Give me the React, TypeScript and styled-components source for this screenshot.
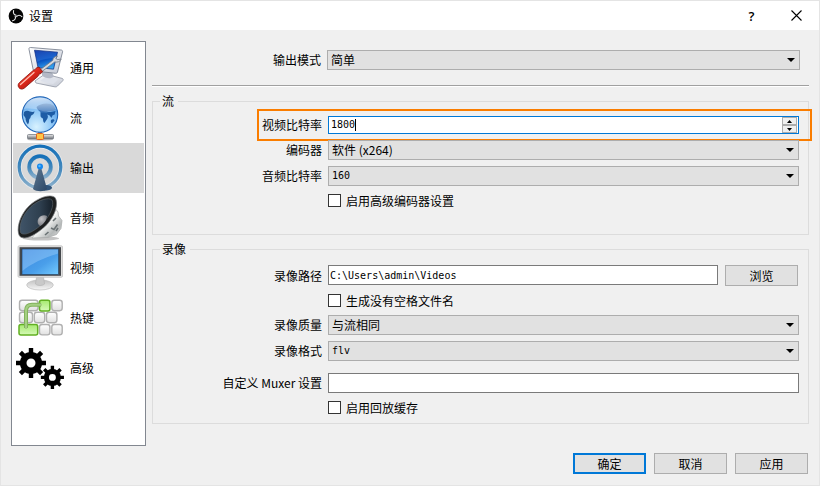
import React, { useId, useState } from "react";
import styled, { createGlobalStyle } from "styled-components";

const cjk = `"Noto Sans CJK SC", "Noto Sans", sans-serif`;
const mono = `"DejaVu Sans Mono", "Noto Sans CJK SC", monospace`;

const GlobalStyle = createGlobalStyle`
  *, *::before, *::after { box-sizing: border-box; }
  body { margin: 0; background: #f0f0f0; color: #000; font: 12px/14px ${cjk}; }
  button, input, select { margin: 0; font: inherit; color: inherit; border-radius: 0; }
`;

const Window = styled.div`
  display: flex;
  flex-direction: column;
  min-height: 100vh;
  border: 1px solid #e4e4e4;
  background: #f0f0f0;
`;

const TitleBar = styled.header`
  display: flex;
  align-items: center;
  height: 29px;
  padding-left: 7px;
  background: #fff;
`;

const Title = styled.h1`
  flex: 1;
  margin: 0 0 0 5px;
  font: 12px/14px ${cjk};
`;

const TitleButton = styled.button`
  display: grid;
  place-items: center;
  width: 45px;
  height: 26px;
  padding: 0;
  border: 0;
  background: none;
  font: 600 13px/16px "Open Sans", sans-serif;
`;

const Body = styled.div`
  display: grid;
  grid-template-columns: 135px minmax(0, 1fr);
  gap: 6px;
  flex: 1;
  padding: 11px 10px 0;
`;

const Sidebar = styled.nav`
  padding: 1px;
  border: 1px solid #828790;
  background: #fff;
`;

const SidebarItem = styled.button<{ $active: boolean }>`
  display: flex;
  align-items: center;
  gap: 6px;
  width: 100%;
  height: 50px;
  padding: 0 3px;
  border: 0;
  background: ${(p) => (p.$active ? "#d9d9d9" : "transparent")};
  text-align: left;
`;

const Pane = styled.main`
  display: flex;
  flex-direction: column;
  padding-top: 9px;
`;

const Row = styled.div<{ $end?: number; $top?: number }>`
  position: relative;
  display: grid;
  grid-template-columns: 169px minmax(0, 1fr);
  column-gap: 6px;
  align-items: center;
  margin-top: ${(p) => p.$top ?? 0}px;
  padding-right: ${(p) => p.$end ?? 9}px;
`;

const Label = styled.label`
  text-align: right;
  white-space: nowrap;
`;

const Divider = styled.hr`
  width: 100%;
  height: 2px;
  margin: 15px 0 7px;
  border: 0;
  border-top: 1px solid #a0a0a0;
  background: #fff;
`;

const Group = styled.fieldset<{ $top: number; $bottom: number }>`
  display: flex;
  flex-direction: column;
  gap: 6px;
  min-width: 0;
  margin: 0 0 7px;
  padding: ${(p) => p.$top}px 0 ${(p) => p.$bottom}px;
  border: 1px solid #dcdcdc;
`;

const Legend = styled.legend`
  margin-left: 7px;
  padding: 0 4px 0 2px;
`;

const Combo = styled.div`
  display: grid;
  align-items: center;

  > * { grid-area: 1 / 1; }
  > svg { justify-self: end; margin-right: 5px; pointer-events: none; }
`;

const Select = styled.select<{ $mono?: boolean }>`
  appearance: none;
  width: 100%;
  height: 20px;
  padding: 0 20px 0 3px;
  border: 1px solid #adadad;
  outline: 0;
  background: #e1e1e1;
  font: ${(p) => (p.$mono ? `10px/16px ${mono}` : `12px/16px ${cjk}`)};
`;

const TextInput = styled.input`
  width: 100%;
  height: 20px;
  padding: 0 1px;
  border: 1px solid #7a7a7a;
  outline: 0;
  background: #fff;
  font: 10px/16px ${mono};
`;

const SpinBox = styled.div`
  display: flex;
  align-items: center;
  height: 18px;
  padding: 0 1px 0 2px;
  border: 1px solid #0078d7;
  background: #fff;
`;

const SpinInput = styled.input`
  field-sizing: content;
  height: 16px;
  padding: 0;
  border: 0;
  outline: 0;
  background: none;
  caret-color: transparent;
  font: 10px/16px ${mono};
`;

const Caret = styled.span`
  width: 1px;
  height: 12px;
  background: #000;
`;

const SpinButtons = styled.div`
  display: grid;
  grid-template-rows: 1fr 1fr;
  width: 15px;
  height: 16px;
  margin-left: auto;
`;

const SpinButton = styled.button`
  display: grid;
  place-items: center;
  padding: 0;
  border: 1px solid #adadad;
  background: #f0f0f0;
`;

const FocusFrame = styled.div`
  position: absolute;
  inset: -7px -4px -7px 104px;
  border: 2px solid #fa7d00;
  pointer-events: none;
`;

const CheckLabel = styled.label`
  display: flex;
  grid-column: 2;
  align-items: center;
  justify-self: start;
  gap: 5px;
  height: 17px;
`;

const CheckBox = styled.input`
  appearance: none;
  width: 13px;
  height: 13px;
  border: 1px solid #333;
  background: #fff;

  &:checked { box-shadow: inset 0 0 0 2px #fff; background: #333; }
`;

const PathField = styled.div`
  display: flex;
  align-items: flex-start;
  gap: 7px;
`;

const Button = styled.button<{ $primary?: boolean }>`
  flex: none;
  width: 73px;
  height: 21px;
  padding: 0;
  border: ${(p) => (p.$primary ? "2px solid #0078d7" : "1px solid #adadad")};
  background: #e1e1e1;
  line-height: 16px;
`;

const Footer = styled.footer`
  display: flex;
  justify-content: flex-end;
  gap: 8px;
  padding: 7px 11px 11px;
`;

const Logo = () => (
  <svg width="16" height="16" viewBox="0 0 16 16" aria-hidden="true">
    <circle cx="8" cy="8" r="7.4" fill="#050505" />
    <g fill="none" stroke="#e8e8e8" strokeWidth="1.1" strokeLinecap="round">
      {[0, 120, 240].map((a) => (
        <path key={a} d="M5.6 2.6C4.9 5.2 6 6.8 8.2 7.2" transform={`rotate(${a} 8 8)`} />
      ))}
    </g>
  </svg>
);

const CloseIcon = () => (
  <svg width="11" height="11" viewBox="0 0 11 11" aria-hidden="true">
    <path d="M.5.5l10 10M10.5.5l-10 10" stroke="#000" strokeWidth="1.1" />
  </svg>
);

const Arrow = ({ up = false, small = false }: { up?: boolean; small?: boolean }) => (
  <svg width={small ? 5 : 8} height={small ? 3 : 4} viewBox="0 0 8 4" preserveAspectRatio="none" aria-hidden="true">
    <path d={up ? "M0 4h8L4 0z" : "M0 0h8L4 4z"} fill="#000" />
  </svg>
);

const Icon = ({ children }: { children: React.ReactNode }) => (
  <svg width="48" height="48" viewBox="0 0 48 48" aria-hidden="true">
    {children}
  </svg>
);

const GeneralIcon = () => (
  <Icon>
    <defs>
      <linearGradient id="gScreen" x1=".2" y1="0" x2=".5" y2="1">
        <stop offset="0" stopColor="#0a2c9c" />
        <stop offset=".55" stopColor="#0b55c4" />
        <stop offset="1" stopColor="#35a8f2" />
      </linearGradient>
      <linearGradient id="gCase" x1="0" y1="0" x2="1" y2="1">
        <stop offset="0" stopColor="#fff" />
        <stop offset="1" stopColor="#c3c8d4" />
      </linearGradient>
      <linearGradient id="gHandle" x1="0" y1="0" x2="1" y2="1">
        <stop offset="0" stopColor="#ff8a73" />
        <stop offset=".45" stopColor="#e02a1c" />
        <stop offset="1" stopColor="#8c0c08" />
      </linearGradient>
    </defs>
    <path d="M19 37l10-7 17.500 4.500c1 .6.8 1.800 0 2.500l-5 5c-1 1-2 1-3.500.7L20 39z" fill="url(#gCase)" stroke="#9a9fab" strokeWidth=".9" />
    <path d="M24 37l6-4.500 12 3-5 4.500z" fill="#dde1ea" />
    <path d="M26 27l10 1.500 2 4c-3 3-9 2-12-1z" fill="#b4b9c6" />
    <path d="M14.500 3.500l30.500 2.500c1.300.1 1.800.9 1.500 2l-5 20c-.3 1-1 1.500-2 1.300L19 27c-1.200-.1-1.700-.7-1.900-1.700L13 5.300c-.2-1.200.4-1.900 1.500-1.800z" fill="url(#gCase)" stroke="#7d8493" strokeWidth=".9" />
    <path d="M18.500 6.200l23 2-4 17-15.500-1.600z" fill="url(#gScreen)" stroke="#0a2a80" strokeWidth=".7" />
    <path d="M19 6.600l22 2-1.500 5.400c-7 0-13 1-18.500 4z" fill="#5aa4ff" opacity=".22" />
    <path d="M22.500 27l14.300-10.800c0-2.200 1.700-3.700 4.700-4.200l-1.700 2.200 1.300 1.500 4.100-.7c-1 2.500-3.700 3.700-6.400 2.900L24 29z" fill="#d5d8de" stroke="#6f7683" strokeWidth=".8" />
    <path d="M3.500 38.500l13-11.500c1-.9 1.400-1.300 2.500-1.200l1.500-2 2.500-.8 3.500 4.500-1.500 2-2 .6c0 1-.4 1.700-1.200 2.400L8.500 44c-2 1.700-4.500 1.300-5.700-.5-1.100-1.700-.8-3.700.7-5z" fill="url(#gHandle)" stroke="#86130d" strokeWidth=".8" />
    <path d="M4.500 40.500l13.500-12" stroke="#ffc0b3" strokeWidth="1.300" strokeLinecap="round" />
  </Icon>
);

const StreamIcon = () => (
  <Icon>
    <defs>
      <radialGradient id="gGlobe" cx=".4" cy=".85" r=".9">
        <stop offset="0" stopColor="#d8f2ff" />
        <stop offset=".5" stopColor="#8fc8f7" />
        <stop offset="1" stopColor="#3a86da" />
      </radialGradient>
      <linearGradient id="gGloss" x1="0" y1="0" x2="0" y2="1">
        <stop offset="0" stopColor="#fff" stopOpacity=".75" />
        <stop offset="1" stopColor="#fff" stopOpacity=".15" />
      </linearGradient>
      <linearGradient id="gPipe" x1="0" y1="0" x2="0" y2="1">
        <stop offset="0" stopColor="#eee" />
        <stop offset="1" stopColor="#686c73" />
      </linearGradient>
    </defs>
    <ellipse cx="24" cy="45.500" rx="13" ry="1.500" fill="#777" opacity=".3" />
    <rect x="22" y="37" width="4" height="5" fill="#8d949e" />
    <rect x="11.500" y="40.500" width="26" height="4.500" rx="1" fill="url(#gPipe)" stroke="#777c84" strokeWidth=".8" />
    <rect x="20.500" y="39.500" width="7" height="6" rx="1" fill="#ffc545" stroke="#e0601f" />
    <circle cx="24" cy="20.500" r="17.700" fill="url(#gGlobe)" stroke="#1f63b4" strokeWidth="1.100" />
    <path d="M8 18c2-1.500 4-1.500 6-.5l2.500.5 2.200-.5-1.200 2.500-2.500 1.700-.7 2.300c-1 .8-1.500 2-1.300 4l-1 2.500c-2-2.500-2.500-4.500-2.500-6.500L7.500 21z" fill="#1f5a9f" />
    <path d="M20.500 13c4-4 13-5 17.500-1l1.500 3.500c-3 2.500-6 1.500-9 2.500-2.500 1-5 1-6.500-.3-1.500-1-3-2.700-3.500-4.700z" fill="#3c76bb" />
    <path d="M24.500 18c3 1 7-.5 10 0l5-1-.8 3.500-2 .8-1.300 2.700-1.700-2.500-2.500-1c1 1.500 1 3-.2 4.700L28.500 29c-1.300-1-1.500-2.500-1.500-4.500-1.700-.7-2.800-1.800-2.500-3.500z" fill="#1d5ca6" />
    <path d="M35 26c1.500-1 3-1 3.500.5l-2.500 3c-1-.5-1.500-2-1-3.500z" fill="#1d5ca6" />
    <path d="M8 15C10 7 17 3.500 24 3.500S38 7 40 15c-5 4-10 3-15 1.500S13 14 8 15z" fill="url(#gGloss)" />
  </Icon>
);

const OutputIcon = () => (
  <Icon>
    <defs>
      <linearGradient id="gRing" x1="0" y1="0" x2="0" y2="1">
        <stop offset="0" stopColor="#1570b8" />
        <stop offset=".55" stopColor="#4489bd" />
        <stop offset="1" stopColor="#8db1cc" />
      </linearGradient>
      <linearGradient id="gMast" x1="0" y1="0" x2="1" y2="1">
        <stop offset="0" stopColor="#5e7891" />
        <stop offset="1" stopColor="#2b4767" />
      </linearGradient>
    </defs>
    <circle cx="24" cy="23" r="20.800" fill="none" stroke="#eef2f5" strokeWidth="5" opacity=".6" />
    <circle cx="24" cy="23" r="20.800" fill="none" stroke="url(#gRing)" strokeWidth="3.200" />
    <circle cx="24" cy="23" r="10.800" fill="none" stroke="url(#gRing)" strokeWidth="3.800" />
    <path d="M26 44c0-4 9-4 10-.5 0 2-4 3.500-8 3z" fill="#31557b" />
    <path d="M22.500 25h3l5.500 20c-2 3-11 3-14 0z" fill="url(#gMast)" />
    <circle cx="24" cy="22.500" r="3" fill="#1687ed" />
    <circle cx="23.500" cy="22" r="1.200" fill="#58bcff" />
  </Icon>
);

const AudioIcon = () => (
  <Icon>
    <defs>
      <linearGradient id="gCone" x1="0" y1="0" x2="1" y2="0">
        <stop offset="0" stopColor="#405468" />
        <stop offset=".6" stopColor="#2f4050" />
        <stop offset="1" stopColor="#17212b" />
      </linearGradient>
      <linearGradient id="gMagnet" x1="0" y1="0" x2="1" y2="1">
        <stop offset="0" stopColor="#878b8b" />
        <stop offset=".5" stopColor="#f5f6f5" />
        <stop offset=".75" stopColor="#b5b9b9" />
        <stop offset="1" stopColor="#ddd" />
      </linearGradient>
      <radialGradient id="gCap" cx=".4" cy=".35" r=".7">
        <stop offset="0" stopColor="#c3c3c7" />
        <stop offset="1" stopColor="#77797f" />
      </radialGradient>
    </defs>
    <ellipse cx="25" cy="44.500" rx="18" ry="2" fill="#555" opacity=".35" />
    <path d="M38 13l4 5 .5 4 3.500 4.500-1 8-4.500 6-8.500 3-16 .5z" fill="url(#gMagnet)" stroke="#a5a8a8" strokeWidth=".7" />
    <path d="M37 27l3-3M35 34l3 1.500 3.500-5M29 41l3.500-3M40 37l2-3" stroke="#6a7274" strokeWidth="1.600" fill="none" />
    <path d="M3.500 42C0 36 3 22 13 12 22 3.500 34-.5 39 3.500c4 6 0 18-8 27C21 40.500 8 47.500 3.500 42z" fill="#1d1f20" stroke="#7d8082" strokeWidth=".7" />
    <path d="M4.500 38.500C2.500 32 6 21 15 12.500c8-7 18-9.500 21-6.500 2.500 5-1.500 15-8.500 22.500C20.500 36 8 43.500 4.500 38.500z" fill="url(#gCone)" stroke="#5e666b" strokeWidth=".6" />
    <path d="M24 32c-2.500-1.500-3-5-1.500-7.500C24.500 21.500 28 20.500 31 22c-.5 4-3 8-7 10z" fill="url(#gCap)" />
  </Icon>
);

const VideoIcon = () => (
  <Icon>
    <defs>
      <linearGradient id="gDisplay" x1="0" y1="0" x2="1" y2="1">
        <stop offset="0" stopColor="#3a86df" />
        <stop offset=".6" stopColor="#4a9fea" />
        <stop offset="1" stopColor="#74cbff" />
      </linearGradient>
      <linearGradient id="gStand" x1="0" y1="0" x2="0" y2="1">
        <stop offset="0" stopColor="#c2c2c2" />
        <stop offset="1" stopColor="#f6f6f6" />
      </linearGradient>
    </defs>
    <ellipse cx="24" cy="41" rx="13.300" ry="5" fill="url(#gStand)" stroke="#c3c3c3" strokeWidth=".8" />
    <path d="M20.500 33h7l1 7c-2 2-7 2-9 0z" fill="#c9c9c9" stroke="#aaa" strokeWidth=".5" />
    <rect x="2" y="1.800" width="44.500" height="31.500" rx="1.200" fill="#e0e0e0" stroke="#c3c3c3" strokeWidth=".8" />
    <rect x="3.500" y="3.200" width="41.500" height="28.600" fill="#45484c" />
    <rect x="6" y="5" width="36.500" height="25.500" fill="url(#gDisplay)" stroke="#26405e" strokeWidth=".6" />
    <path d="M6.500 5.500h35.500v4C30 13 14 20 6.500 27z" fill="#b5dcff" opacity=".35" />
  </Icon>
);

const keys = [
  [3.5, 6.3, 18.5],
  [35.8, 6.3, 10.4],
  [3.5, 18.3, 13],
  [18.3, 18.3, 10.4],
  [30.5, 18.3, 10.4],
  [23.5, 30.5, 10.4],
  [35.8, 30.5, 10.4],
];

const HotkeysIcon = () => (
  <Icon>
    <defs>
      <linearGradient id="gKey" x1="0" y1="0" x2="0" y2="1">
        <stop offset="0" stopColor="#fff" />
        <stop offset="1" stopColor="#e0e0e0" />
      </linearGradient>
      <linearGradient id="gGreen" x1="0" y1="0" x2="0" y2="1">
        <stop offset="0" stopColor="#a6ea70" />
        <stop offset="1" stopColor="#d6f9b8" />
      </linearGradient>
    </defs>
    {keys.map(([x, y, w]) => (
      <rect key={`${x}-${y}`} x={x} y={y} width={w} height="10.400" rx="2.600" fill="url(#gKey)" stroke="#b0b0b0" strokeWidth="1.400" />
    ))}
    <rect x="23.500" y="6.300" width="10.400" height="10.600" rx="2" fill="url(#gGreen)" stroke="#62b022" strokeWidth="1.500" />
    <rect x="3" y="30.500" width="18.700" height="10.600" rx="2" fill="url(#gGreen)" stroke="#62b022" strokeWidth="1.500" />
    <path d="M10 34V17c0-4 2-6.300 6-6.300h9" fill="none" stroke="#82b25c" strokeWidth="4" />
    <path d="M10 35V17c0-4 2-6.300 6-6.300h10" fill="none" stroke="#a4cf82" strokeWidth="2" />
  </Icon>
);

const Gear = ({ x, y, scale }: { x: number; y: number; scale: number }) => (
  <g transform={`translate(${x} ${y}) scale(${scale})`}>
    {[0, 45, 90, 135].map((a) => (
      <path key={a} d="M-2.200-15h4.400v6h-4.400zM-2.200 9h4.400v6h-4.400z" transform={`rotate(${a})`} fill="#000" />
    ))}
    <circle r="7.800" fill="none" stroke="#000" strokeWidth="6.600" />
  </g>
);

const AdvancedIcon = () => (
  <Icon>
    <Gear x={15} y={19} scale={1} />
    <Gear x={36.4} y={33.4} scale={0.77} />
  </Icon>
);

const sections = [
  { name: "通用", icon: <GeneralIcon /> },
  { name: "流", icon: <StreamIcon /> },
  { name: "输出", icon: <OutputIcon /> },
  { name: "音频", icon: <AudioIcon /> },
  { name: "视频", icon: <VideoIcon /> },
  { name: "热键", icon: <HotkeysIcon /> },
  { name: "高级", icon: <AdvancedIcon /> },
];

type ComboRowProps = { label: string; value: string; mono?: boolean };

const ComboRow = ({ label, value, mono: isMono }: ComboRowProps) => {
  const id = useId();
  return (
    <Row>
      <Label htmlFor={id}>{label}</Label>
      <Combo>
        <Select id={id} $mono={isMono}>
          <option>{value}</option>
        </Select>
        <Arrow />
      </Combo>
    </Row>
  );
};

const CheckRow = ({ label }: { label: string }) => (
  <Row>
    <CheckLabel>
      <CheckBox type="checkbox" />
      {label}
    </CheckLabel>
  </Row>
);

export default function App() {
  const [active, setActive] = useState("输出");
  const [bitrate, setBitrate] = useState("1800");
  const step = (d: number) => setBitrate((v) => String(Math.max(0, Number(v) + d)));

  return (
    <>
      <GlobalStyle />
      <Window>
        <TitleBar>
          <Logo />
          <Title>设置</Title>
          <TitleButton type="button" aria-label="帮助">?</TitleButton>
          <TitleButton type="button" aria-label="关闭"><CloseIcon /></TitleButton>
        </TitleBar>
        <Body>
          <Sidebar>
            {sections.map((s) => (
              <SidebarItem key={s.name} type="button" $active={s.name === active} onClick={() => setActive(s.name)}>
                {s.icon}
                {s.name}
              </SidebarItem>
            ))}
          </Sidebar>
          <Pane>
            <ComboRow label="输出模式" value="简单" />
            <Divider />
            <Group $top={8} $bottom={25}>
              <Legend>流</Legend>
              <Row>
                <Label htmlFor="bitrate">视频比特率</Label>
                <SpinBox>
                  <SpinInput id="bitrate" inputMode="numeric" value={bitrate} onChange={(e) => setBitrate(e.target.value)} />
                  <Caret />
                  <SpinButtons>
                    <SpinButton type="button" aria-label="增加" onClick={() => step(1)}><Arrow up small /></SpinButton>
                    <SpinButton type="button" aria-label="减少" onClick={() => step(-1)}><Arrow small /></SpinButton>
                  </SpinButtons>
                </SpinBox>
                <FocusFrame />
              </Row>
              <ComboRow label="编码器" value="软件 (x264)" />
              <ComboRow label="音频比特率" value="160" mono />
              <CheckRow label="启用高级编码器设置" />
            </Group>
            <Group $top={9} $bottom={7}>
              <Legend>录像</Legend>
              <Row $end={10}>
                <Label htmlFor="path">录像路径</Label>
                <PathField>
                  <TextInput id="path" defaultValue="C:\Users\admin\Videos" />
                  <Button type="button">浏览</Button>
                </PathField>
              </Row>
              <CheckRow label="生成没有空格文件名" />
              <ComboRow label="录像质量" value="与流相同" />
              <ComboRow label="录像格式" value="flv" mono />
              <Row $top={6}>
                <Label htmlFor="muxer">自定义 Muxer 设置</Label>
                <TextInput id="muxer" />
              </Row>
              <CheckRow label="启用回放缓存" />
            </Group>
          </Pane>
        </Body>
        <Footer>
          <Button type="button" $primary>确定</Button>
          <Button type="button">取消</Button>
          <Button type="button">应用</Button>
        </Footer>
      </Window>
    </>
  );
}
